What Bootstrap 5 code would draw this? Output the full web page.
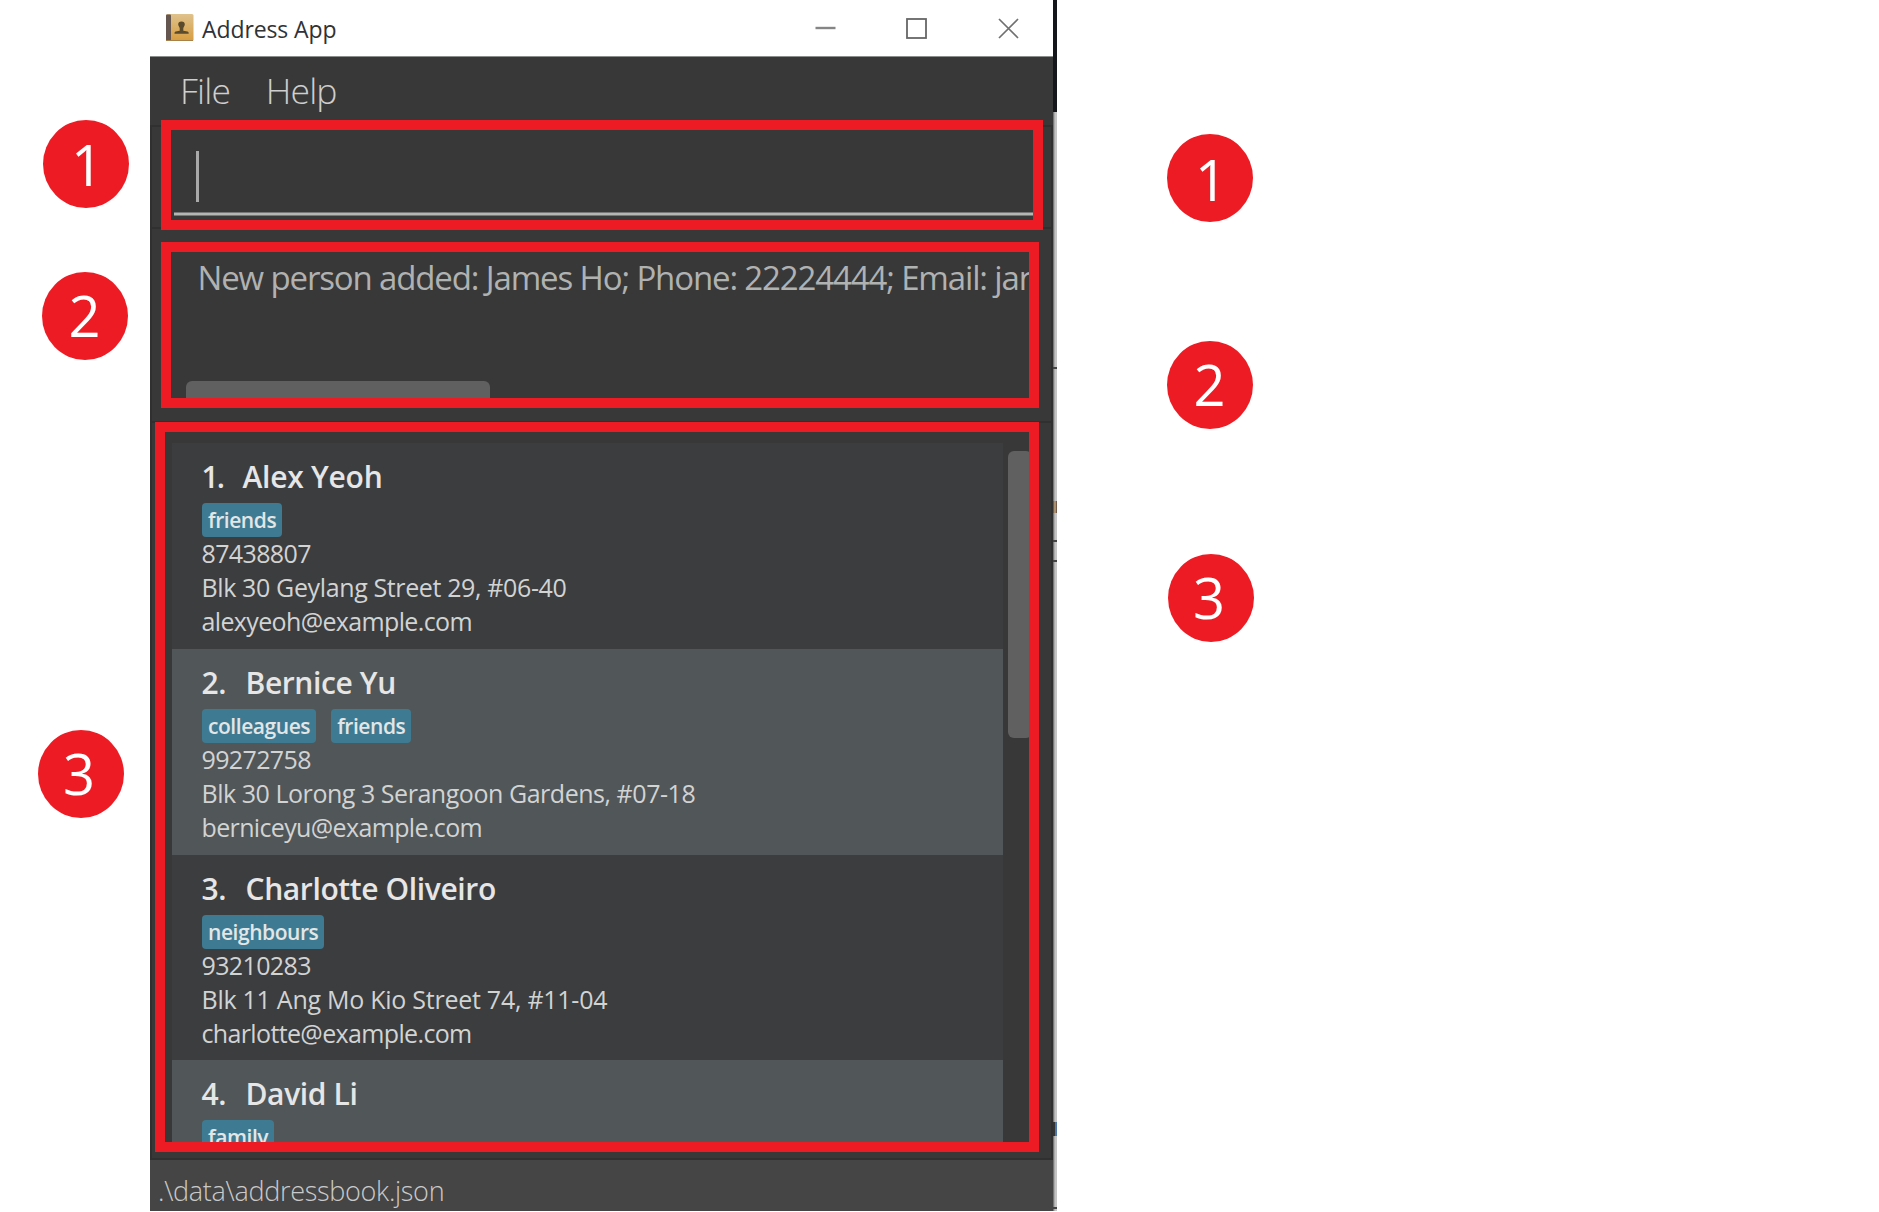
<!DOCTYPE html>
<html lang="en">
<head>
<meta charset="utf-8">
<title>Address App</title>
<link rel="stylesheet" href="https://cdn.jsdelivr.net/npm/bootstrap@5.3.0/dist/css/bootstrap.min.css">
<style>
  body { font-family: "Open Sans", "Noto Sans", sans-serif; background: #fff; overflow: hidden; height: 1212px; }
  .stage { margin-left: 150px; height: 1211px; width: 907px; }
  .app-window { width: 903px; background: #383838; }
  .title-strip { height: 57px; line-height: 57px; padding-left: 15px; background: #fff; border-bottom: 1px solid #8b8d8d; font-size: 23px; color: #303236; }
  .title-strip .app-name { margin-left: 8px; padding-top: 2px; letter-spacing: -.1px; }
  .win-buttons { margin-right: 34.5px; gap: 70.5px; }
  .menu-strip { height: 68px; line-height: 67px; padding-left: 30px; gap: 35.5px; font-size: 35.5px; font-weight: 300; letter-spacing: -.8px; color: #cecece; }
  .pane { border: 2px solid #303030; border-bottom-width: 0; }
  .marked { border: 10px solid #ed1c24; position: relative; overflow: hidden; }
  .pane-command { height: 102px; }
  .pane-command .marked { margin: -7px 8px 0 9px; height: 110px; z-index: 1; }
  .caret { width: 3px; height: 51px; margin: 21px 0 0 25px; background: #a9a9a9; }
  .underline { height: 4px; margin: 10px 0 0 3px; background: #b4b6b4; border-top: 1px solid #777; border-bottom: 1px solid #777; }
  .pane-result { height: 194px; padding: 13px 12px 0 9px; }
  .pane-result .marked { height: 166px; }
  .result-text { margin: 4px 0 0 26.5px; line-height: 44px; font-size: 33px; letter-spacing: -1.14px; white-space: nowrap; color: #b0b2b2; }
  .h-thumb { width: 304px; height: 17px; margin-left: 15px; background: #606060; border-radius: 6px 6px 0 0; }
  .pane-list { height: 739px; border-bottom-width: 2px; padding-left: 3px; padding-right: 12px; }
  .pane-list .marked { height: 730px; margin-top: -1px; }
  .people { width: 831px; margin: 11px 0 0 7px; }
  .person { height: 205.75px; padding: 12px 30px 0 29.5px; background: #3c3d3f; color: #d2d3d3; }
  .person:nth-child(even) { background: #515658; }
  .person-name { height: 42px; line-height: 44.5px; font-size: 30px; font-weight: 600; letter-spacing: -.38px; color: #e6e6e6; }
  .idx { width: 44px; }
  .person:first-child .idx { width: 41px; letter-spacing: -2px; }
  .person:first-child .person-name { letter-spacing: -.25px; }
  .tags { gap: 15px; margin: 6px 0 -.6px; }
  .tag { height: 34px; line-height: 34px; padding: 0 5.5px 0 6.5px; border-radius: 4px; background: #3e7a91; font-size: 21px; font-weight: 600; letter-spacing: -.44px; color: #e3e6e6; }
  .detail { line-height: 34px; font-size: 25px; letter-spacing: -.62px; white-space: nowrap; }
  .addr { letter-spacing: -.37px; }
  .addr-long { letter-spacing: -.46px; }
  .addr-wide { letter-spacing: -.26px; }
  .mail { letter-spacing: -.64px; }
  .v-thumb { width: 24px; height: 287px; margin: 19px 0 0 5px; border-radius: 6px; background: #606060; }
  .status-strip { height: 46px; line-height: 62px; padding-left: 8px; background: #454545; font-size: 27px; font-weight: 300; letter-spacing: -.3px; color: #cacaca; flex: 1; }
  .backdrop { width: 4px; background: linear-gradient(90deg, #777 0 1px, #aaa 1px 2px, #c4c4c4 2px); }
  .backdrop div { width: 4px; }
  .pin { position: absolute; width: 86px; height: 88px; border-radius: 50%; background: #ed1c24; color: #fff; font-size: 56px; line-height: 86px; text-align: center; }
</style>
<script src="https://cdn.jsdelivr.net/npm/bootstrap@5.3.0/dist/js/bootstrap.bundle.min.js"></script>
</head>
<body>
<div class="stage d-flex">
  <main class="app-window d-flex flex-column">
    <header class="title-strip d-flex align-items-center flex-shrink-0">
      <svg width="29" height="28" viewBox="0 0 29 28">
        <defs><linearGradient id="cover" x1="0" y1="0" x2="0" y2="1"><stop offset="0" stop-color="#dfc28c"/><stop offset="1" stop-color="#d79d3f"/></linearGradient></defs>
        <rect x="1" y="0" width="27.500" height="27" rx="1.500" fill="url(#cover)"/>
        <rect x="1" y="0.500" width="5" height="26" rx="1" fill="#65564f"/>
        <path d="M1 26.500H28" stroke="#a7814b" stroke-width="1"/>
        <path d="M16.500 7.500c2.300 0 3.300 1.300 3.300 3 0 1.600-1.500 2.700-1.500 4v2.200l4.200.9c1 .3 1.200.9 1.200 2.200H9.500c0-1.300.3-1.900 1.200-2.200l4-.9v-2.200c0-1.300-1.500-2.400-1.500-4 0-1.700 1-3 3.300-3z" fill="#5a4a2e"/>
      </svg>
      <span class="app-name">Address App</span>
      <div class="win-buttons d-flex ms-auto">
        <svg width="21" height="21" viewBox="0 0 21 21"><path d="M0.500 10H20.500" stroke="#858585" stroke-width="2.400"/></svg>
        <svg width="21" height="21" viewBox="0 0 21 21"><rect x="1" y="1" width="19" height="19" fill="none" stroke="#666" stroke-width="1.800"/></svg>
        <svg width="21" height="21" viewBox="0 0 21 21"><path d="M1 1 20 20M20 1 1 20" stroke="#707070" stroke-width="1.700"/></svg>
      </div>
    </header>
    <nav class="menu-strip d-flex flex-shrink-0"><span>File</span><span>Help</span></nav>

    <section class="pane pane-command flex-shrink-0">
      <div class="marked"><div class="caret"></div><div class="underline"></div></div>
    </section>

    <section class="pane pane-result flex-shrink-0">
      <div class="marked d-flex flex-column justify-content-between">
        <div class="result-text">New person added: James Ho; Phone: 22224444; Email: jar</div>
        <div class="h-thumb"></div>
      </div>
    </section>

    <section class="pane pane-list flex-shrink-0">
      <div class="marked d-flex align-items-start">
        <div class="people flex-shrink-0">
          <article class="person">
            <div class="person-name d-flex"><span class="idx">1.</span><span>Alex Yeoh</span></div>
            <div class="tags d-flex"><span class="tag">friends</span></div>
            <div class="detail">87438807</div>
            <div class="detail addr">Blk 30 Geylang Street 29, #06-40</div>
            <div class="detail mail">alexyeoh@example.com</div>
          </article>
          <article class="person">
            <div class="person-name d-flex"><span class="idx">2.</span><span>Bernice Yu</span></div>
            <div class="tags d-flex"><span class="tag">colleagues</span><span class="tag">friends</span></div>
            <div class="detail">99272758</div>
            <div class="detail addr addr-long">Blk 30 Lorong 3 Serangoon Gardens, #07-18</div>
            <div class="detail mail">berniceyu@example.com</div>
          </article>
          <article class="person">
            <div class="person-name d-flex"><span class="idx">3.</span><span>Charlotte Oliveiro</span></div>
            <div class="tags d-flex"><span class="tag">neighbours</span></div>
            <div class="detail">93210283</div>
            <div class="detail addr addr-wide">Blk 11 Ang Mo Kio Street 74, #11-04</div>
            <div class="detail mail">charlotte@example.com</div>
          </article>
          <article class="person">
            <div class="person-name d-flex"><span class="idx">4.</span><span>David Li</span></div>
            <div class="tags d-flex"><span class="tag">family</span></div>
          </article>
        </div>
        <div class="v-thumb flex-shrink-0"></div>
      </div>
    </section>
    <footer class="status-strip">.\data\addressbook.json</footer>
  </main>
  <aside class="backdrop d-flex flex-column">
    <div style="height:112px;background:#15161b"></div>
    <div style="height:2px;background:#444;margin-top:255px"></div>
    <div style="height:12px;background:linear-gradient(90deg,#444,#c9a77c 50%,#5a4038);margin-top:132px"></div>
    <div style="height:2px;background:#444;margin-top:27px"></div>
    <div style="height:2px;background:#444;margin-top:18px"></div>
    <div style="height:14px;background:linear-gradient(90deg,#333 50%,#4a78ac 50%);margin-top:560px"></div>
    <div style="height:2px;background:#444;margin-top:71px"></div>
  </aside>
</div>

<div class="pin" style="left:43px;top:120px;text-indent:2px;line-height:89px">1</div>
<div class="pin" style="left:42px;top:272px;text-indent:-1px">2</div>
<div class="pin" style="left:38px;top:730px;text-indent:-4px">3</div>
<div class="pin" style="left:1167px;top:134px;text-indent:2px;line-height:90px">1</div>
<div class="pin" style="left:1167px;top:341px;text-indent:-1px">2</div>
<div class="pin" style="left:1168px;top:554px;text-indent:-4px">3</div>
</body>
</html>
